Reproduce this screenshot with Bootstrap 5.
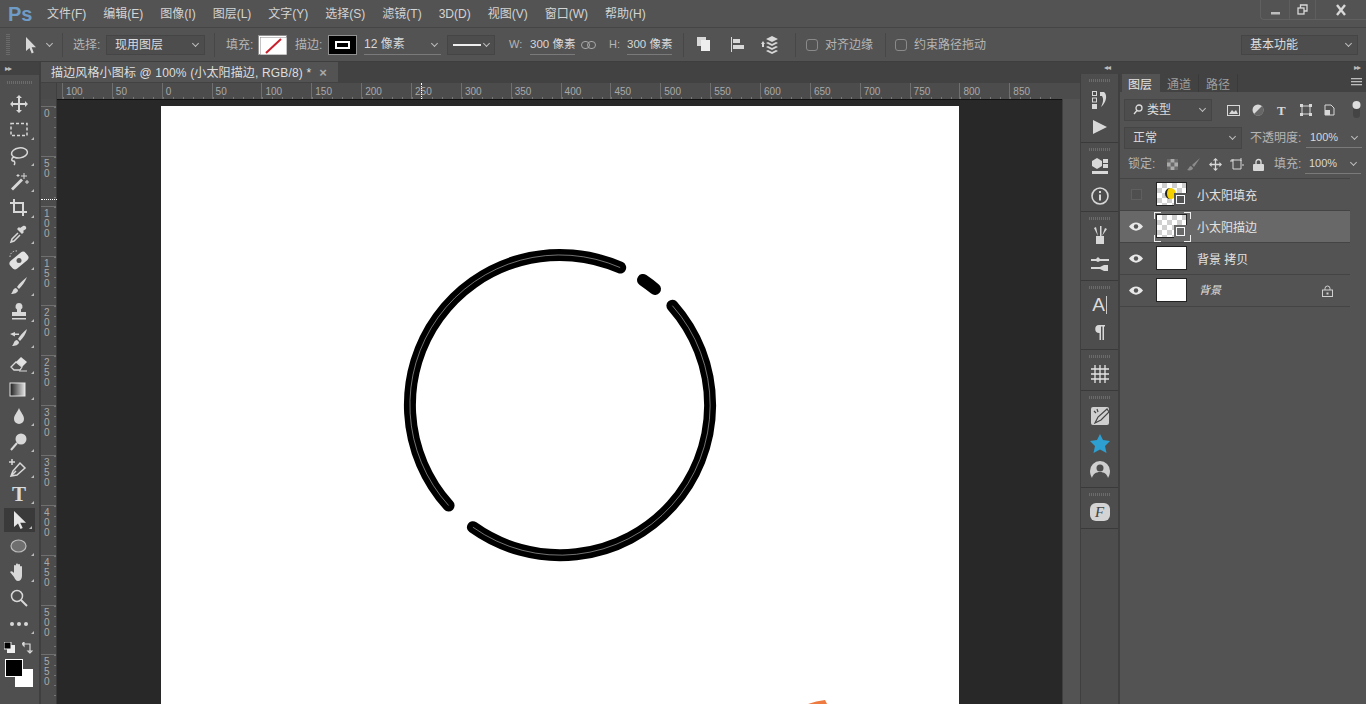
<!DOCTYPE html>
<html lang="zh-CN">
<head>
<meta charset="utf-8">
<title>Photoshop</title>
<link href="https://cdn.jsdelivr.net/npm/bootstrap@5.3.0/dist/css/bootstrap.min.css" rel="stylesheet">
<style>
:root{--ps:#535353;--ps-dark:#424242;--ps-line:#3b3b3b;--ps-tx:#d2d2d2;--ps-dim:#a8a8a8;}
html,body{height:704px;overflow:hidden;}
body{background:var(--ps);color:var(--ps-tx);font:12px/1.2 "Liberation Sans","Noto Sans CJK SC",sans-serif;width:1366px;}
svg{display:block;flex:none;}
.ic{fill:#d8d8d8;}
.ol{fill:none;stroke:#d8d8d8;stroke-width:1.5;}
.menubar{height:28px;background:#535353;border-bottom:1px solid #454545;padding:1px 0 0;}
.ps-logo{font:bold 20px/1 "Liberation Sans",sans-serif;color:#6e9cc6;width:47px;padding-left:8px;flex:none;}
.menubar .navbar-nav{gap:17px;}
.navbar-expand .navbar-nav .nav-link.mitem{padding:0;color:#d4d4d4;font-size:12px;white-space:nowrap;}
.winbtns{position:absolute;right:0;top:0;height:20px;border:1px solid #606060;border-top:0;border-right:0;border-bottom-left-radius:4px;}
.winbtns>div{border-right:1px solid #5e5e5e;}
.optbar{height:34px;background:#535353;border-bottom:1px solid #3e3e3e;padding-top:1px;}
.grip-v{width:4px;height:22px;margin:0 15px 0 6px;background:repeating-linear-gradient(#6a6a6a 0 1px,transparent 1px 2px);}
.vsep{width:1px;height:24px;background:#474747;flex:none;}
.psel{background:#4d4d4d;border:1px solid #454545;color:#dcdcdc;height:20px;display:flex;align-items:center;justify-content:space-between;padding:0 6px 0 8px;flex:none;}
.chev{width:5px;height:5px;border-right:1px solid #bdbdbd;border-bottom:1px solid #bdbdbd;transform:rotate(45deg);margin-top:-3px;flex:none;}
.lbl{color:#b5b5b5;white-space:nowrap;flex:none;}
.val{color:#d8d8d8;white-space:nowrap;border-bottom:1px solid #7a7a7a;height:20px;display:flex;align-items:center;justify-content:space-between;flex:none;}
.swatch{width:29px;height:20px;border:1px solid #909090;flex:none;padding:1px;}
.cb{width:12px;height:12px;margin:0;background:transparent;border:1px solid #8a8a8a;border-radius:2px;flex:none;}
.workrow{height:642px;}
.toolcol{width:41px;flex:none;border-right:2px solid #3f3f3f;background:#4f4f4f;}
.colhead{height:13px;background:#424242;color:#bdbdbd;font-size:8px;line-height:13px;padding-left:5px;letter-spacing:-1px;}
.grip-h{height:3px;margin:6px 7px 7px;background:repeating-linear-gradient(90deg,#6b6b6b 0 1px,transparent 1px 2px);}
.tool{height:26px;position:relative;display:flex;align-items:center;justify-content:center;width:36px;margin-left:1px;}
.tool::after{content:"";position:absolute;right:3px;bottom:3px;border-left:3px solid transparent;border-bottom:3px solid #bbb;}
.tool.plain::after{display:none;}
.tool.sel{background:#3a3a3a;height:24px;margin:1px 0 1px 4px;width:31px;}
.colors{height:44px;}
.fgc{width:18px;height:18px;background:#000;border:1px solid #fff;top:22px;left:5px;z-index:1;}
.bgc{width:18px;height:18px;background:#fff;top:32px;left:15px;}
.doc{width:1039px;flex:none;}
.tabbar{height:21px;background:#424242;}
.doctab{width:297px;height:20px;background:#535353;padding:2px 0 0 10px;color:#dedede;display:flex;align-items:center;white-space:nowrap;letter-spacing:.15px;}
.rulerh{height:16px;background:#4c4c4c;position:relative;overflow:hidden;}
.corner{width:16px;flex:none;border-right:1px solid #3f3f3f;background:#4a4a4a;}
.rcell{width:49.87px;flex:none;height:16px;border-left:1px solid #6f6f6f;padding:4px 0 0 3px;font-size:10px;line-height:10px;color:#a9a9a9;
 background:repeating-linear-gradient(90deg,#777 0 1px,transparent 1px 10px) 0 100%/100% 2px no-repeat;}
.stage{height:605px;}
.rulerv{width:16px;flex:none;background:#4c4c4c;padding-top:7px;overflow:hidden;border-right:1px solid #3a3a3a;}
.vcell{height:49.87px;border-top:1px solid #6f6f6f;font-size:10px;line-height:10px;color:#a9a9a9;padding:2px 0 0 3px;
 background:repeating-linear-gradient(#777 0 1px,transparent 1px 10px) 100% 0/2px 100% no-repeat;}
.vcell span{display:block;width:6px;word-break:break-all;}
.pasteboard{width:1005px;flex:none;background:#282828;padding:6px 0 0 104px;border-top:1px solid #111;overflow:hidden;}
.sheet{width:798px;height:598px;background:#fff;}
.vscroll{flex:1;background:#535353;border-left:1px solid #3f3f3f;}
.guide-h{position:absolute;left:380px;top:0;height:16px;border-left:1px dotted #fff;}
.guide-v{position:absolute;left:0;top:100px;width:16px;border-top:1px dotted #fff;}
.rightcol{width:286px;flex:none;}
.rhead{height:12px;background:#424242;color:#bdbdbd;font-size:8px;line-height:12px;letter-spacing:-1px;padding:0 6px 0 24px;}
.dock{width:40px;flex:none;background:#4d4d4d;border-left:1px solid #3f3f3f;border-right:2px solid #3f3f3f;}
.dgroup{border-bottom:1px solid #3a3a3a;display:flex;flex-direction:column;align-items:center;}
.dgroup .grip-h{width:22px;margin:5px 0 0;flex:none;}
.panel{flex:1;background:#535353;}
.ptabs{height:18px;background:#424242;}
.ptab{padding:2px 7px 0;height:18px;line-height:18px;color:#9d9d9d;border-right:1px solid #3a3a3a;font-size:12px;}
.ptab.on{background:#535353;color:#e4e4e4;width:38px;margin-left:2px;border:0;padding:2px 0 0 6px;}
.prow{display:flex;align-items:center;}
.lyr{height:32px;background:#535353;border:0;border-bottom:1px solid #444;border-radius:0;padding:0;color:#e2e2e2;display:flex;align-items:center;position:relative;}
.lyr.on{background:#686868;}
.eye{width:32px;flex:none;display:flex;justify-content:center;}
.eyeoff{width:11px;height:11px;border:1px solid #5f5f5f;background:#4f4f4f;}
.thumb{width:31px;height:24px;background:#fff;border:1px solid #222;flex:none;margin:-2px 10px 0 4px;position:relative;}
.lname{padding-top:4px;}
.chk{background:conic-gradient(#cfcfcf 25%,#fff 0 50%,#cfcfcf 0 75%,#fff 0) 0 0/10px 10px;}
.sobj{position:absolute;right:-1px;bottom:-1px;width:13px;height:13px;background:#535353;padding:2px 0 0 2px;}
.sun{position:absolute;left:8px;top:5px;width:11px;height:11px;border-radius:50%;background:#f5d000;border-left:2px solid #222;}
.bgname{font-family:"Liberation Serif","Noto Sans CJK SC",serif;font-style:italic;font-size:11px;margin-left:2px;}
.focus-br{position:absolute;left:-3px;top:-3px;width:37px;height:30px;background:
 linear-gradient(#eee,#eee) 0 0/7px 1px no-repeat,linear-gradient(#eee,#eee) 0 0/1px 7px no-repeat,
 linear-gradient(#eee,#eee) 100% 0/7px 1px no-repeat,linear-gradient(#eee,#eee) 100% 0/1px 7px no-repeat,
 linear-gradient(#eee,#eee) 0 100%/7px 1px no-repeat,linear-gradient(#eee,#eee) 0 100%/1px 7px no-repeat,
 linear-gradient(#eee,#eee) 100% 100%/7px 1px no-repeat,linear-gradient(#eee,#eee) 100% 100%/1px 7px no-repeat;}
</style>
</head>
<body class="d-flex flex-column position-relative">

<nav class="navbar navbar-expand menubar flex-nowrap justify-content-start">
  <div class="ps-logo">Ps</div>
  <div class="navbar-nav flex-row">
    <a class="nav-link mitem" href="#">文件(F)</a><a class="nav-link mitem" href="#">编辑(E)</a><a class="nav-link mitem" href="#">图像(I)</a><a class="nav-link mitem" href="#">图层(L)</a><a class="nav-link mitem" href="#">文字(Y)</a><a class="nav-link mitem" href="#">选择(S)</a><a class="nav-link mitem" href="#">滤镜(T)</a><a class="nav-link mitem" href="#">3D(D)</a><a class="nav-link mitem" href="#">视图(V)</a><a class="nav-link mitem" href="#">窗口(W)</a><a class="nav-link mitem" href="#">帮助(H)</a>
  </div>
  <div class="winbtns d-flex">
    <div class="d-flex align-items-center justify-content-center" style="width:29px"><svg width="12" height="12"><rect x="2" y="8" width="9" height="2.500" class="ic" fill-opacity=".8"/></svg></div>
    <div class="d-flex align-items-center justify-content-center" style="width:26px"><svg width="11" height="11" class="ol" style="stroke-width:1.300"><rect x="1" y="4" width="6" height="6"/><path d="M3.500 4V1h6.500v6H7"/></svg></div>
    <div class="d-flex align-items-center justify-content-center border-0" style="width:50px"><svg width="12" height="12"><path d="M2 1l8 10M10 1L2 11" stroke="#d8d8d8" stroke-width="2.400"/></svg></div>
  </div>
</nav>

<div class="optbar d-flex align-items-center">
  <div class="grip-v"></div>
  <svg width="12" height="17" viewBox="0 0 12 17" class="ic"><path d="M1 0v14l3.500-3 2.200 5.500 2-1-2-5.300H11z"/></svg>
  <div class="chev" style="margin:-3px 10px 0 10px"></div>
  <div class="vsep"></div>
  <div class="lbl" style="margin:0 3px 0 10px;width:30px">选择:</div>
  <div class="psel" style="width:99px">现用图层<div class="chev"></div></div>
  <div class="vsep" style="margin:0 11px 0 9px"></div>
  <div class="lbl" style="width:32px">填充:</div>
  <div class="swatch bg-white"><svg width="27" height="18" viewBox="0 0 27 18"><rect width="27" height="18" fill="#fff" stroke="#888"/><path d="M6 16L21 2" stroke="#c8202c" stroke-width="2"/></svg></div>
  <div class="lbl" style="margin-left:8px;width:33px">描边:</div>
  <div class="swatch" style="background:#000;padding:5px 6px"><div class="border border-2 border-white h-100"></div></div>
  <div class="val" style="width:77px;margin-left:7px">12 像素<div class="chev me-1"></div></div>
  <div class="psel" style="width:48px;margin-left:6px;padding:0 5px"><svg width="28" height="2"><rect width="28" height="2" fill="#eee"/></svg><div class="chev"></div></div>
  <div class="lbl" style="margin-left:14px;width:21px;font-size:11px">W:</div>
  <div class="val" style="width:45px;font-size:11.500px">300 像素</div>
  <svg width="15" height="8" viewBox="0 0 15 8" style="margin:0 6px" fill="none" stroke="#a8a8a8"><rect x=".5" y=".5" width="8" height="7" rx="3.500"/><rect x="6.500" y=".5" width="8" height="7" rx="3.500"/></svg>
  <div class="lbl" style="margin-left:7px;width:18px;font-size:11px">H:</div>
  <div class="val" style="width:45px;font-size:11.500px">300 像素</div>
  <div class="vsep" style="margin:0 12px 0 11px"></div>
  <svg width="16" height="18" viewBox="0 0 16 18" class="ic"><rect x="1" y="1" width="9" height="9"/><rect x="5" y="4" width="9" height="11" fill="#eee"/></svg>
  <svg style="margin-left:18px" width="16" height="18" viewBox="0 0 16 18" class="ic"><rect x="1" y="1" width="1" height="15"/><rect x="3" y="3" width="7" height="4"/><rect x="3" y="9" width="11" height="4"/></svg>
  <svg style="margin-left:14px" width="20" height="20" viewBox="0 0 20 20" class="ic"><path d="M12 1l6 3-6 3-6-3zM6 8l6 3 6-3-2-1-4 2-4-2zM6 12l6 3 6-3-2-1-4 2-4-2zM6 16l6 3 6-3-2-1-4 2-4-2zM3 6l2 3H4v3H2V9H1z"/></svg>
  <div class="vsep" style="margin:0 10px 0 15px"></div>
  <input class="form-check-input cb" type="checkbox" aria-label="对齐边缘">
  <div class="lbl" style="margin-left:7px;width:60px">对齐边缘</div>
  <div class="vsep" style="margin-right:9px"></div>
  <input class="form-check-input cb" type="checkbox" aria-label="约束路径拖动">
  <div class="lbl" style="margin-left:7px;width:327px">约束路径拖动</div>
  <div class="psel" style="width:117px">基本功能<div class="chev"></div></div>
</div>

<div class="workrow d-flex">
  <aside class="toolcol">
    <div class="colhead">▸▸</div>
    <div class="grip-h"></div>
    <div class="tool plain"><svg width="20" height="20" viewBox="0 0 20 20" class="ic"><path d="M10 1l3 3h-2v5h5V7l3 3-3 3v-2h-5v5h2l-3 3-3-3h2v-5H4v2l-3-3 3-3v2h5V4H7z"/></svg></div>
    <div class="tool"><svg width="20" height="20" viewBox="0 0 20 20"><rect x="2" y="3.500" width="16" height="12" fill="none" stroke="#d8d8d8" stroke-width="1.500" stroke-dasharray="3 2"/></svg></div>
    <div class="tool"><svg width="20" height="20" viewBox="0 0 20 20" class="ol"><ellipse cx="10.500" cy="7" rx="8" ry="5" transform="rotate(-8 10 7)"/><path d="M5 11c-3 1-3 4 0 4 1 1 1 3 0 4"/></svg></div>
    <div class="tool"><svg width="20" height="20" viewBox="0 0 20 20" class="ic"><path d="M2 16.500L12 6.500l2 2L4 18.500z"/><path d="M15 1v6M12 4h6M18 8v4M16 10h4M9 2v3M7.500 3.500h3" stroke="#d8d8d8"/></svg></div>
    <div class="tool"><svg width="20" height="20" viewBox="0 0 20 20" fill="none" stroke="#d8d8d8" stroke-width="2"><path d="M5 1v13h13M1 5h13v13"/></svg></div>
    <div class="tool"><svg width="20" height="20" viewBox="0 0 20 20"><path d="M9 9L3 15l-1 3 3-1 6-6" fill="none" stroke="#d8d8d8" stroke-width="1.500"/><path d="M14 2c2-1 4 1 3 3l-3 2 1 1-2 2-5-5 2-2 1 1z" fill="#d8d8d8"/></svg></div>
    <div class="tool"><svg width="20" height="20" viewBox="0 0 20 20"><rect x="0" y="5.500" width="20" height="10" rx="3.500" transform="rotate(-40 10 10.500)" fill="#e2e2e2"/><circle cx="10" cy="10.500" r="2.500" fill="#555"/><path d="M1 7A6 6 0 0 1 8 1" fill="none" stroke="#d8d8d8" stroke-dasharray="1.500 1.500"/></svg></div>
    <div class="tool"><svg width="20" height="20" viewBox="0 0 20 20" class="ic"><path d="M18 1C14 4 10 8 8 11l2 2c3-3 6-7 8-12zM7 12c-3 0-3 4-5 6 3 0 7-1 7-4z"/></svg></div>
    <div class="tool"><svg width="20" height="20" viewBox="0 0 20 20" class="ic"><path d="M10 1a3.500 3.500 0 0 1 2 6.400V10h5v4H3v-4h5V7.400A3.500 3.500 0 0 1 10 1z"/><rect x="3" y="16" width="14" height="1.500"/></svg></div>
    <div class="tool"><svg width="20" height="20" viewBox="0 0 20 20" class="ic"><path d="M18 1c-4 3-7 7-9 10l2 2c3-3 6-7 7-12zM8 12c-3 0-3 4-5 6 3 0 7-1 7-4zM1 6l5-2v1.500h4V7H6v1.500z"/></svg></div>
    <div class="tool"><svg width="20" height="20" viewBox="0 0 20 20"><path d="M12 3l6 5-5 5-6-5z" fill="#e2e2e2"/><path d="M7 8l6 5-2 3H5l-3-3z" fill="none" stroke="#d8d8d8" stroke-width="1.300"/><path d="M10 17h8" stroke="#d8d8d8"/></svg></div>
    <div class="tool"><svg width="20" height="20" viewBox="0 0 20 20"><defs><linearGradient id="gr"><stop offset="0" stop-color="#1c1c1c"/><stop offset="1" stop-color="#e4e4e4"/></linearGradient></defs><rect x="1" y="3" width="15" height="13" fill="url(#gr)" stroke="#e4e4e4"/></svg></div>
    <div class="tool"><svg width="20" height="20" viewBox="0 0 20 20" class="ic"><path d="M10 2c2 5 5 7 5 11a5 5 0 0 1-10 0c0-4 3-6 5-11z"/></svg></div>
    <div class="tool"><svg width="20" height="20" viewBox="0 0 20 20"><circle cx="12" cy="7" r="5.500" fill="#d8d8d8"/><path d="M8 11l-6 7" stroke="#d8d8d8" stroke-width="2"/></svg></div>
    <div class="tool"><svg width="20" height="20" viewBox="0 0 20 20" class="ol"><path d="M4 13l7-8 5 5-8 7-6 1zM2 18l5-5"/><path d="M3 1v6M0 4h6"/></svg></div>
    <div class="tool" style="font:bold 21px/1 'Liberation Serif',serif;color:#dcdcdc">T</div>
    <div class="tool sel"><svg width="14" height="18" viewBox="0 0 14 18" fill="#e6e6e6"><path d="M1 0v16l4-3.500 2.500 5.500 2.200-1-2.500-5.300H13z"/></svg></div>
    <div class="tool"><svg width="20" height="20" viewBox="0 0 20 20"><ellipse cx="9.500" cy="10" rx="7.500" ry="6" fill="#6f6f6f" stroke="#bcbcbc" stroke-width="1.200"/></svg></div>
    <div class="tool"><svg width="20" height="20" viewBox="0 0 20 20" class="ic"><path d="M5 15L1 10c1-1 2-1 3 0l1 1V4c0-1.500 2-1.500 2 0v4V2.500c0-1.500 2-1.500 2 0V8V3c0-1.500 2-1.500 2 0v5-3c0-1.500 2-1.500 2 0v9c0 3-2 5-4 5H9c-2 0-3-2-4-4z"/></svg></div>
    <div class="tool plain"><svg width="20" height="20" viewBox="0 0 20 20" class="ol"><circle cx="8" cy="8" r="5.500"/><path d="M12 12l6 6" stroke-width="2"/></svg></div>
    <div class="tool"><svg width="20" height="6" viewBox="0 0 20 6" class="ic"><circle cx="3" cy="3" r="2"/><circle cx="10" cy="3" r="2"/><circle cx="17" cy="3" r="2"/></svg></div>
    <div class="colors position-relative">
      <svg class="position-absolute" style="left:4px;top:5px" width="11" height="11" viewBox="0 0 11 11"><rect x="3" y="3" width="8" height="8" fill="#eee"/><rect width="7" height="7" fill="#000" stroke="#eee"/></svg>
      <svg class="position-absolute" style="left:22px;top:5px" width="11" height="12" viewBox="0 0 11 12" fill="none" stroke="#d8d8d8" stroke-width="1.200"><path d="M1 2h7v7M0 2l2-2v4zM8 11l-2-2h4z" /></svg>
      <div class="position-absolute fgc"></div>
      <div class="position-absolute bgc"></div>
    </div>
  </aside>

  <main class="doc">
    <div class="tabbar"><div class="doctab">描边风格小图标 @ 100% (小太阳描边, RGB/8) *<span class="ms-2 fw-bold" style="color:#aaa;font-size:13px">×</span></div></div>
    <div class="rulerh d-flex">
      <div class="corner"></div>
      <div style="width:5px;flex:none"></div>
      <div class="rcell">100</div><div class="rcell">50</div><div class="rcell">0</div><div class="rcell">50</div><div class="rcell">100</div><div class="rcell">150</div><div class="rcell">200</div><div class="rcell">250</div><div class="rcell">300</div><div class="rcell">350</div><div class="rcell">400</div><div class="rcell">450</div><div class="rcell">500</div><div class="rcell">550</div><div class="rcell">600</div><div class="rcell">650</div><div class="rcell">700</div><div class="rcell">750</div><div class="rcell">800</div><div class="rcell">850</div>
      <div class="guide-h"></div>
    </div>
    <div class="stage d-flex position-relative">
      <div class="rulerv">
        <div class="vcell"><span>0</span></div><div class="vcell"><span>50</span></div><div class="vcell"><span>100</span></div><div class="vcell"><span>150</span></div><div class="vcell"><span>200</span></div><div class="vcell"><span>250</span></div><div class="vcell"><span>300</span></div><div class="vcell"><span>350</span></div><div class="vcell"><span>400</span></div><div class="vcell"><span>450</span></div><div class="vcell"><span>500</span></div><div class="vcell"><span>550</span></div>
      </div>
      <div class="guide-v"></div>
      <div class="pasteboard">
        <div class="sheet">
          <svg width="798" height="598" viewBox="161 106 798 598">
            <g fill="none" stroke="#000" stroke-width="12" stroke-linecap="round">
              <path d="M448.600 505.500A150 150 0 0 1 620.200 267.600"/>
              <path d="M643 280A150 150 0 0 1 655 289"/>
              <path d="M672.400 305.700A150 150 0 0 1 472.900 527.200"/>
            </g>
            <g fill="none" stroke="#fff" stroke-width=".6" stroke-opacity=".75">
              <path d="M448.600 505.500A150 150 0 0 1 620.200 267.600"/>
              <path d="M672.400 305.700A150 150 0 0 1 472.900 527.200"/>
            </g>
            <path d="M808 704q8-3 17-4l2 4z" fill="#ee7a3f"/>
          </svg>
        </div>
      </div>
      <div class="vscroll"></div>
    </div>
  </main>

  <div class="rightcol d-flex flex-column">
    <div class="rhead d-flex justify-content-between"><span>◂◂</span><span>▸▸</span></div>
    <div class="d-flex flex-grow-1">
      <aside class="dock">
        <div class="dgroup" style="height:69px">
          <div class="grip-h"></div>
          <svg class="mt-2" width="18" height="20" viewBox="0 0 18 20"><g fill="none" stroke="#d8d8d8"><rect x="1.500" y="1.500" width="4" height="4"/><rect x="1.500" y="8" width="4" height="4"/></g><rect x="1" y="14" width="5" height="5" fill="#d8d8d8"/><path d="M9 2h4c3 2 3 8-1 13l-2 2c2-4 3-8 1-11H9z" fill="#d8d8d8"/></svg>
          <svg class="mt-2" width="16" height="18" viewBox="0 0 16 18"><path d="M1 2l14 7L1 16z" fill="#d8d8d8"/></svg>
        </div>
        <div class="dgroup" style="height:69px">
          <div class="grip-h"></div>
          <svg style="margin-top:6px" width="18" height="18" viewBox="0 0 18 18" fill="#d8d8d8"><path d="M6 1l5 3v5l-5 3-5-3V4z"/><rect x="12" y="2" width="5" height="4"/><rect x="12" y="7" width="5" height="4"/><rect x="1" y="14" width="16" height="3"/></svg>
          <svg style="margin-top:11px" width="20" height="20" viewBox="0 0 20 20"><circle cx="10" cy="10" r="8" fill="none" stroke="#d8d8d8" stroke-width="1.600"/><rect x="9" y="8.500" width="2" height="6" fill="#d8d8d8"/><rect x="9" y="5" width="2" height="2" fill="#d8d8d8"/></svg>
        </div>
        <div class="dgroup" style="height:69px">
          <div class="grip-h"></div>
          <svg style="margin-top:5px" width="18" height="20" viewBox="0 0 18 20" fill="#d8d8d8"><rect x="5" y="11" width="8" height="8"/><path d="M7 11L3 3l2-1zM9 11V1h1.500v10zM11 11l3-8 2 1z"/></svg>
          <svg style="margin-top:10px" width="20" height="18" viewBox="0 0 20 18" fill="#d8d8d8"><path d="M1 4h5l2-2 2 2h9v2h-9l-2 1-2-1H1zM1 12h9l4-2 4 0v6h-4l-4-2H1z"/></svg>
        </div>
        <div class="dgroup" style="height:69px">
          <div class="grip-h"></div>
          <div class="d-flex align-items-center" style="height:22px;font-size:19px;color:#dcdcdc;margin-top:5px">A<span style="width:1px;height:18px;background:#ccc;margin-left:1px"></span></div>
          <svg class="mt-2" width="12" height="16" viewBox="0 0 12 16" fill="#d8d8d8"><path d="M5 1h6v1.500H10V16H8.500V2.500H7V16H5.500V9A4 4 0 0 1 5 1z"/></svg>
        </div>
        <div class="dgroup" style="height:41px">
          <div class="grip-h"></div>
          <svg style="margin-top:6px" width="20" height="20" viewBox="0 0 20 20" fill="none" stroke="#e4e4e4" stroke-width="1.300"><path d="M5 1v18M10 1v18M15 1v18M1 5h18M1 10h18M1 15h18"/></svg>
        </div>
        <div class="dgroup" style="height:97px">
          <div class="grip-h"></div>
          <svg style="margin-top:7px" width="20" height="20" viewBox="0 0 20 20"><rect x="1" y="1" width="18" height="18" rx="2" fill="#cfcfcf"/><path d="M17 3L8 11l-3 6 6-3 8-8zM4 5l2 2M7 3l1 3" fill="none" stroke="#444" stroke-width="1.200"/></svg>
          <svg class="mt-2" width="20" height="19" viewBox="0 0 20 19"><path d="M10 0l3 6 7 1-5 5 1.500 7L10 15.500 3.500 19 5 12 0 7l7-1z" fill="#2d9fd0"/></svg>
          <svg class="mt-2" width="20" height="18" viewBox="0 0 20 18" fill="#cfcfcf"><path d="M10 0a10 10 0 0 1 10 10c0 3-1 5-2 7-1-4-4-6-8-6s-7 2-8 6C1 15 0 13 0 10A10 10 0 0 1 10 0z"/><circle cx="10" cy="7" r="3.500" fill="#4d4d4d"/></svg>
        </div>
        <div class="dgroup" style="height:41px">
          <div class="grip-h"></div>
          <div class="rounded d-flex align-items-center justify-content-center" style="margin-top:7px;width:20px;height:18px;background:#d4d4d4;color:#444;font:italic 15px/1 'Liberation Serif',serif">F</div>
        </div>
        <div class="flex-grow-1"></div>
      </aside>

      <section class="panel">
        <div class="ptabs d-flex">
          <div class="ptab on">图层</div><div class="ptab">通道</div><div class="ptab">路径</div>
          <svg class="ms-auto me-1 mt-1" width="11" height="8" viewBox="0 0 11 8" fill="#bdbdbd"><rect width="11" height="1.300"/><rect y="3" width="11" height="1.300"/><rect y="6" width="11" height="1.300"/></svg>
        </div>
        <div class="prow" style="height:22px;margin-top:7px;padding-left:4px">
          <div class="psel" style="width:88px;height:22px"><span class="d-flex align-items-center"><svg class="me-1" width="10" height="11" viewBox="0 0 10 11" fill="none" stroke="#ddd" stroke-width="1.300"><circle cx="6" cy="4" r="3"/><path d="M4 6.500L1 10"/></svg>类型</span><div class="chev"></div></div>
          <svg style="margin-left:15px" width="13" height="11" viewBox="0 0 13 11"><rect x=".5" y=".5" width="12" height="10" fill="none" stroke="#d8d8d8"/><path d="M2 9l3-4 2 2 2-2 2 4z" fill="#d8d8d8"/></svg>
          <svg style="margin-left:12px" width="12" height="12" viewBox="0 0 12 12"><circle cx="6" cy="6" r="5.500" fill="#d8d8d8"/><path d="M10 2L2 10a5.500 5.500 0 0 0 8-8z" fill="#666"/></svg>
          <div style="margin-left:13px;font:bold 13px/1 'Liberation Serif',serif;color:#d8d8d8;width:12px">T</div>
          <svg style="margin-left:11px" width="12" height="12" viewBox="0 0 12 12"><rect x="2" y="2" width="8" height="8" fill="none" stroke="#d8d8d8"/><g fill="#d8d8d8"><rect width="3" height="3"/><rect x="9" width="3" height="3"/><rect y="9" width="3" height="3"/><rect x="9" y="9" width="3" height="3"/></g></svg>
          <svg style="margin-left:12px" width="11" height="12" viewBox="0 0 11 12"><path d="M1 1h6l3 3v7H1z" fill="none" stroke="#d8d8d8"/><rect x="1" y="6" width="5" height="5" fill="#d8d8d8"/></svg>
          <svg style="margin-left:17px" width="9" height="20" viewBox="0 0 9 20"><rect x="1" y="1" width="7" height="17" rx="3.500" fill="#444"/><circle cx="4.500" cy="5" r="4" fill="#ddd"/></svg>
        </div>
        <div class="prow" style="height:22px;margin-top:6px;padding-left:4px">
          <div class="psel" style="width:118px;height:22px">正常<div class="chev"></div></div>
          <div class="lbl" style="margin-left:8px;width:56px">不透明度:</div>
          <div class="val ps-1" style="width:56px;height:20px;font-size:11px">100%<div class="chev" style="margin-right:5px"></div></div>
        </div>
        <div class="prow" style="height:22px;margin-top:4px;padding-left:8px">
          <div class="lbl" style="width:35px">锁定:</div>
          <svg width="11" height="11" viewBox="0 0 11 11" class="ms-1" style="margin-right:-1px"><rect width="11" height="11" fill="#aaa"/><path d="M0 0h3.600v3.600H0zM7.400 0H11v3.600H7.400zM3.600 3.600h3.800v3.800H3.600zM0 7.400h3.600V11H0zM7.400 7.400H11V11H7.400z" fill="#6a6a6a"/></svg>
          <svg style="margin-left:10px" width="14" height="14" viewBox="0 0 14 14"><path d="M13 1L5 8l2 2zM4 9c-2 0-2 3-4 4 3 1 6 0 6-2z" fill="#8c8c8c"/></svg>
          <svg style="margin-left:8px" width="13" height="13" viewBox="0 0 20 20" fill="#d8d8d8"><path d="M10 0l4 4h-3v5h5V6l4 4-4 4v-3h-5v5h3l-4 4-4-4h3v-5H4v3l-4-4 4-4v3h5V4H6z"/></svg>
          <svg style="margin-left:8px" width="14" height="13" viewBox="0 0 14 13" fill="none" stroke="#d8d8d8"><path d="M1 2h10v9H3V1M0 3h3M11 0v3M12 7h2"/></svg>
          <svg style="margin-left:9px" width="11" height="13" viewBox="0 0 11 13"><path d="M3 6V4a2.500 2.500 0 0 1 5 0v2" fill="none" stroke="#d8d8d8" stroke-width="1.400"/><rect y="6" width="11" height="7" rx="1" fill="#d8d8d8"/></svg>
          <div class="lbl" style="margin-left:10px;width:31px">填充:</div>
          <div class="val ps-1" style="width:56px;height:20px;font-size:11px">100%<div class="chev" style="margin-right:5px"></div></div>
        </div>
        <div class="list-group" style="margin-top:3px;width:230px;border-top:1px solid #444;border-radius:0">
          <div class="list-group-item lyr">
            <div class="eye"><div class="eyeoff"></div></div>
            <div class="thumb chk"><div class="sun"></div><div class="sobj"><div class="border border-light" style="width:9px;height:9px"></div></div></div><span class="lname">小太阳填充</span>
          </div>
          <div class="list-group-item lyr on">
            <div class="eye"><svg width="14" height="9" viewBox="0 0 14 9"><path d="M0 4.500C4-1 10-1 14 4.500 10 10 4 10 0 4.500z" fill="#e8e8e8"/><circle cx="7" cy="4.500" r="2.200" fill="#555"/></svg></div>
            <div class="thumb chk"><div class="focus-br"></div><div class="sobj" style="background:#686868"><div class="border border-light" style="width:9px;height:9px"></div></div></div><span class="lname">小太阳描边</span>
          </div>
          <div class="list-group-item lyr">
            <div class="eye"><svg width="14" height="9" viewBox="0 0 14 9"><path d="M0 4.500C4-1 10-1 14 4.500 10 10 4 10 0 4.500z" fill="#e8e8e8"/><circle cx="7" cy="4.500" r="2.200" fill="#555"/></svg></div>
            <div class="thumb"></div><span class="lname">背景 拷贝</span>
          </div>
          <div class="list-group-item lyr">
            <div class="eye"><svg width="14" height="9" viewBox="0 0 14 9"><path d="M0 4.500C4-1 10-1 14 4.500 10 10 4 10 0 4.500z" fill="#e8e8e8"/><circle cx="7" cy="4.500" r="2.200" fill="#555"/></svg></div>
            <div class="thumb"></div><span class="bgname">背景</span>
            <svg class="position-absolute" style="left:202px;top:10px" width="11" height="12" viewBox="0 0 11 12" fill="none" stroke="#d0d0d0"><path d="M3 5V3.500a2.500 2.500 0 0 1 5 0V5"/><rect x=".5" y="5" width="10" height="6.500"/><rect x="4.500" y="7.500" width="2" height="2" fill="#d0d0d0" stroke="none"/></svg>
          </div>
        </div>
      </section>
    </div>
  </div>
</div>
</body>
</html>
